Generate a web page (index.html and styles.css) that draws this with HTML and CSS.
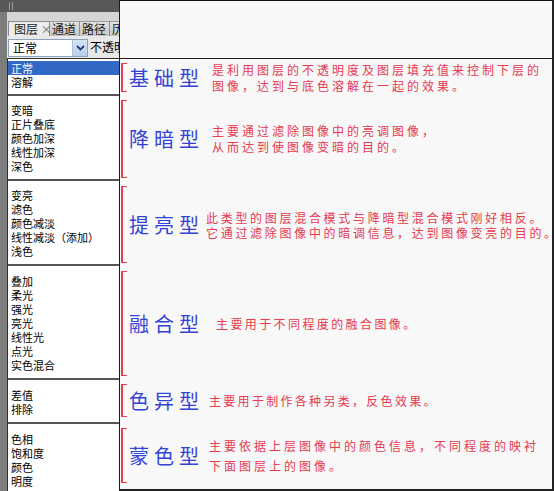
FILE: index.html
```html
<!DOCTYPE html>
<html lang="zh-CN">
<head>
<meta charset="utf-8">
<title>图层混合模式</title>
<link rel="stylesheet" href="styles.css">
</head>
<body>
<div class="frame">
  <div class="panel">
    <div class="panel-head"><span class="grip"></span></div>
    <div class="panel-body">
      <div class="tabs">
        <span class="tab active">图层 <span class="x">×</span></span>
        <span class="tab">通道</span>
        <span class="tab">路径</span>
        <span class="tab">历</span>
      </div>
      <div class="opts">
        <div class="select">
          <span class="select-val">正常</span>
          <span class="arrow"><svg width="9" height="6" viewBox="0 0 9 6"><path d="M1 1 L4.5 4.5 L8 1" fill="none" stroke="#1d3f77" stroke-width="1.8"/></svg></span>
        </div>
        <span class="opacity">不透明</span>
      </div>
      <div class="list">
        <ul class="group g1"><li class="sel">正常</li><li>溶解</li></ul>
        <ul class="group g2"><li>变暗</li><li>正片叠底</li><li>颜色加深</li><li>线性加深</li><li>深色</li></ul>
        <ul class="group g3"><li>变亮</li><li>滤色</li><li>颜色减淡</li><li>线性减淡（添加）</li><li>浅色</li></ul>
        <ul class="group g4"><li>叠加</li><li>柔光</li><li>强光</li><li>亮光</li><li>线性光</li><li>点光</li><li>实色混合</li></ul>
        <ul class="group g5"><li>差值</li><li>排除</li></ul>
        <ul class="group g6"><li>色相</li><li>饱和度</li><li>颜色</li><li>明度</li></ul>
      </div>
    </div>
  </div>
  <div class="main">
    <div class="main-top"></div>
    <div class="notes">
      <div class="note n1">
        <span class="bracket"></span>
        <span class="label">基础型</span>
        <p class="desc">是利用图层的不透明度及图层填充值来控制下层的<br>图像，达到与底色溶解在一起的效果。</p>
      </div>
      <div class="note n2">
        <span class="bracket"></span>
        <span class="label">降暗型</span>
        <p class="desc">主要通过滤除图像中的亮调图像，<br>从而达到使图像变暗的目的。</p>
      </div>
      <div class="note n3">
        <span class="bracket"></span>
        <span class="label">提亮型</span>
        <p class="desc">此类型的图层混合模式与降暗型混合模式刚好相反。<br>它通过滤除图像中的暗调信息，达到图像变亮的目的。</p>
      </div>
      <div class="note n4">
        <span class="bracket"></span>
        <span class="label">融合型</span>
        <p class="desc">主要用于不同程度的融合图像。</p>
      </div>
      <div class="note n5">
        <span class="bracket"></span>
        <span class="label">色异型</span>
        <p class="desc">主要用于制作各种另类，反色效果。</p>
      </div>
      <div class="note n6">
        <span class="bracket"></span>
        <span class="label">蒙色型</span>
        <p class="desc">主要依据上层图像中的颜色信息，不同程度的映衬<br>下面图层上的图像。</p>
      </div>
    </div>
  </div>
</div>
</body>
</html>
```

FILE: styles.css
```css
* { box-sizing: border-box; }
html, body { margin: 0; padding: 0; background: #f8f8f8; }
body {
  font-family: "Noto Sans CJK SC", "Liberation Sans", sans-serif;
  font-size: 12px;
  color: #000;
}
.frame {
  display: flex;
  width: 554px;
  height: 491px;
  overflow: hidden;
}

/* ---------- left panel ---------- */
.panel {
  width: 120px;
  flex: none;
  display: flex;
  flex-direction: column;
  border-right: 1px solid #1c1c1c;
  overflow: hidden;
}
.panel-head {
  height: 12px;
  background: #585858;
  display: flex;
  align-items: center;
  padding-left: 9px;
}
.grip {
  width: 4px;
  height: 8px;
  border-left: 1px solid #9a9a9a;
  border-right: 1px solid #9a9a9a;
}
.panel-body {
  flex: 1;
  display: flex;
  flex-direction: column;
  border-left: 7px solid #7d7d7d;
  min-height: 0;
}
.tabs {
  height: 24px;
  background: #d5d5d5;
  display: flex;
  align-items: flex-end;
  padding-left: 1px;
  white-space: nowrap;
  overflow: hidden;
}
.tab {
  height: 15px;
  line-height: 14px;
  flex: none;
  width: 30px;
  padding-left: 2px;
  background: linear-gradient(#e2e2e2, #c4c4c4);
  border-top: 1px solid #9a9a9a;
  border-right: 1px solid #8d8d8d;
  color: #1a1a1a;
  font-size: 12px;
}
.tab:last-child { width: 10px; }
.tab.active {
  width: 42px;
  padding-left: 5px;
  background: #ececec;
  border: 1px solid #8a8a8a;
  border-bottom: none;
}
.tab .x { color: #666; font-size: 11px; }
.opts {
  height: 22px;
  background: #e8e8e8;
  display: flex;
  align-items: flex-start;
  padding-left: 1px;
  padding-top: 3px;
  white-space: nowrap;
  overflow: hidden;
}
.select {
  width: 80px;
  height: 18px;
  flex: none;
  background: #fff;
  border: 1px solid #8aa2bc;
  display: flex;
  align-items: center;
  justify-content: space-between;
  padding-left: 4px;
}
.select-val { line-height: 14px; }
.arrow {
  width: 15px;
  height: 16px;
  background: linear-gradient(#d7e4f5, #b8cdea);
  border-left: 1px solid #a9bfdc;
  display: flex;
  align-items: center;
  justify-content: center;
}
.opacity { margin-left: 2px; line-height: 16px; width: 29px; overflow: hidden; }
.list {
  flex: 1;
  background: #fff;
  border-top: 1px solid #2e2e2e;
  border-left: 1px solid #2e2e2e;
}
.group {
  list-style: none;
  margin: 0;
  padding: 7px 0 6px;
  border-top: 2px solid #555;
}
.group li {
  font-size: 11px;
  line-height: 14px;
  height: 14px;
  padding-left: 3px;
  white-space: nowrap;
}
.group li.sel { background: #3168c5; color: #fff; }
.g1 { border-top: none; padding: 2px 0 5px; }
.g4, .g5 { padding-top: 8px; }
.g6 { padding: 8px 0 0; }

/* ---------- right side ---------- */
.main {
  flex: 1;
  display: flex;
  flex-direction: column;
  background: #f8f8f8;
  border-top: 1px solid #111;
  border-right: 2px solid #222;
  border-bottom: 2px solid #222;
  overflow: hidden;
}
.main-top {
  height: 58px;
  flex: none;
  border-bottom: 1px solid #1e1e1e;
}
.notes {
  display: flex;
  flex-direction: column;
  gap: 8px;
  padding-top: 4px;
}
.note {
  display: flex;
  align-items: center;
  white-space: nowrap;
}
.bracket {
  align-self: stretch;
  width: 6px;
  flex: none;
  margin-left: 1px;
  border-top: 1px solid #e8404e;
  border-bottom: 1px solid #e8404e;
  border-left: 2px solid #e8404e;
}
.label {
  margin-left: 2px;
  font-size: 20px;
  line-height: 24px;
  letter-spacing: 5px;
  color: #3443d6;
  flex: none;
}
.desc {
  margin: 0 0 0 8px;
  font-size: 12px;
  line-height: 16px;
  letter-spacing: 3px;
  color: #e63a4e;
}
.n1 { height: 29px; }
.n2 { height: 78px; }
.n3 { height: 77px; }
.n3 .desc { margin-left: 2px; line-height: 15px; letter-spacing: 2.7px; }
.n4 { height: 105px; }
.n4 .desc { margin-left: 12px; letter-spacing: 2.4px; }
.n5 { height: 33px; }
.n5 .desc { margin-left: 5px; letter-spacing: 2.3px; }
.n6 { height: 55px; margin-top: 3px; }
.n6 .desc { margin-left: 5px; line-height: 20px; }
```
